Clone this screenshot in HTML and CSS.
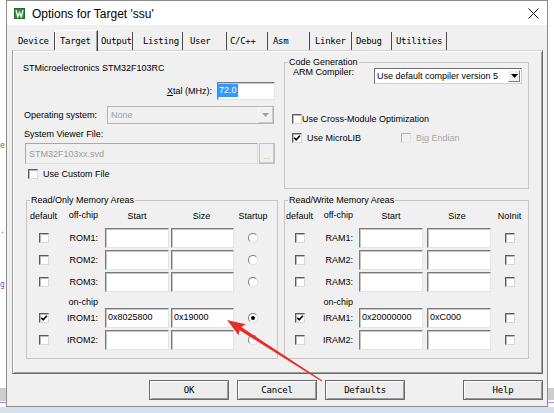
FILE: index.html
```html
<!DOCTYPE html>
<html>
<head>
<meta charset="utf-8">
<title>Options for Target 'ssu'</title>
<link rel="stylesheet" href="styles.css">
</head>
<body>
<div class="desk">
  <span class="deco code code-a">e:</span>
  <span class="deco code code-b">.r</span>
  <span class="deco code code-c">g</span>
  <span class="deco gray-l"></span>
  <span class="deco line-l"></span>
  <span class="deco gray-r"></span>
  <span class="deco line-r"></span>

  <div class="dialog">
    <div class="titlebar">
      <svg class="app-icon" viewBox="0 0 11 11">
        <rect x="0" y="0" width="11" height="11" fill="#2f8f3a"/>
        <rect x="0.5" y="0.5" width="10" height="10" fill="none" stroke="#1d6a27" stroke-width="1"/>
        <path d="M2 2.2 L3.8 8.8 L5.5 4.6 L7.2 8.8 L9 2.2" fill="none" stroke="#fff" stroke-width="1.3"/>
      </svg>
      <span class="title">Options for Target 'ssu'</span>
      <svg class="close" viewBox="0 0 11 11"><path d="M0.5 0.5 L10.5 10.5 M10.5 0.5 L0.5 10.5" stroke="#111" stroke-width="1"/></svg>
    </div>

    <div class="tabs">
      <div class="tab t-device">Device</div>
      <div class="tab active t-target">Target</div>
      <div class="tab t-output">Output</div>
      <div class="tab t-listing">Listing</div>
      <div class="tab t-user">User</div>
      <div class="tab t-cpp">C/C++</div>
      <div class="tab t-asm">Asm</div>
      <div class="tab t-linker">Linker</div>
      <div class="tab t-debug">Debug</div>
      <div class="tab t-util">Utilities</div>
    </div>

    <div class="page">
      <div class="top">
        <div class="target-col">
          <div class="devname">STMicroelectronics STM32F103RC</div>
          <div class="xtal-row">
            <span><u>X</u>tal (MHz):</span>
            <div class="edit xtal"><span class="sel">72.0</span></div>
          </div>
          <div class="os-row">
            <span class="lbl">Operating system:</span>
            <div class="combo dis os">
              <span class="ctext">None</span>
              <span class="drop"><svg viewBox="0 0 7 4" class="tri"><path d="M0 0 H7 L3.5 4 Z" fill="#a0a0a0"/></svg></span>
            </div>
          </div>
          <div class="svf-label">System Viewer File:</div>
          <div class="svf-row">
            <div class="edit dis svf">STM32F103xx.svd</div>
            <div class="browse">...</div>
          </div>
          <div class="custom-row">
            <span class="cb"></span>
            <span>Use Custom File</span>
          </div>
        </div>

        <div class="group codegen">
          <div class="group-title">Code Generation</div>
          <div class="arm-row">
            <span class="lbl">ARM Compiler:</span>
            <div class="combo arm">
              <span class="ctext">Use default compiler version 5</span>
              <span class="drop"><svg viewBox="0 0 7 4" class="tri"><path d="M0 0 H7 L3.5 4 Z" fill="#000"/></svg></span>
            </div>
          </div>
          <div class="opt-row first">
            <span class="cb"></span>
            <span>Use Cross-Module Optimization</span>
          </div>
          <div class="opt-row">
            <span class="opt wide">
              <span class="cb"><svg class="tick" viewBox="0 0 8 8"><path d="M1.2 3.8 L3.2 5.8 L6.8 1.8" fill="none" stroke="#000" stroke-width="1.6"/></svg></span>
              <span>Use MicroLIB</span>
            </span>
            <span class="opt disabled">
              <span class="cb dis"></span>
              <span>B<u>i</u>g Endian</span>
            </span>
          </div>
        </div>
      </div>

      <div class="mem">
        <div class="group memgroup rom">
          <div class="group-title">Read/Only Memory Areas</div>
          <div class="mgrid">
            <span class="hd">default</span><span class="hd lb">off-chip</span><span class="hd">Start</span><span class="hd">Size</span><span class="hd">Startup</span>

            <span class="cb"></span><span class="lb">ROM1:</span><div class="edit st"></div><div class="edit sz"></div><span class="rb"></span>
            <span class="cb"></span><span class="lb">ROM2:</span><div class="edit st"></div><div class="edit sz"></div><span class="rb"></span>
            <span class="cb"></span><span class="lb">ROM3:</span><div class="edit st"></div><div class="edit sz"></div><span class="rb"></span>

            <span></span><span class="lb onchip">on-chip</span><span class="rest"></span>

            <span class="cb"><svg class="tick" viewBox="0 0 8 8"><path d="M1.2 3.8 L3.2 5.8 L6.8 1.8" fill="none" stroke="#000" stroke-width="1.6"/></svg></span><span class="lb">IROM1:</span><div class="edit st">0x8025800</div><div class="edit sz">0x19000</div><span class="rb on"></span>
            <span class="cb"></span><span class="lb">IROM2:</span><div class="edit st"></div><div class="edit sz"></div><span class="rb"></span>
          </div>
        </div>

        <div class="group memgroup ram">
          <div class="group-title">Read/Write Memory Areas</div>
          <div class="mgrid">
            <span class="hd">default</span><span class="hd lb">off-chip</span><span class="hd">Start</span><span class="hd">Size</span><span class="hd">NoInit</span>

            <span class="cb"></span><span class="lb">RAM1:</span><div class="edit st"></div><div class="edit sz"></div><span class="cb"></span>
            <span class="cb"></span><span class="lb">RAM2:</span><div class="edit st"></div><div class="edit sz"></div><span class="cb"></span>
            <span class="cb"></span><span class="lb">RAM3:</span><div class="edit st"></div><div class="edit sz"></div><span class="cb"></span>

            <span></span><span class="lb onchip">on-chip</span><span class="rest"></span>

            <span class="cb"><svg class="tick" viewBox="0 0 8 8"><path d="M1.2 3.8 L3.2 5.8 L6.8 1.8" fill="none" stroke="#000" stroke-width="1.6"/></svg></span><span class="lb">IRAM1:</span><div class="edit st">0x20000000</div><div class="edit sz">0xC000</div><span class="cb"></span>
            <span class="cb"></span><span class="lb">IRAM2:</span><div class="edit st"></div><div class="edit sz"></div><span class="cb"></span>
          </div>
        </div>
      </div>
    </div>

    <div class="buttons">
      <div class="btn">OK</div>
      <div class="btn">Cancel</div>
      <div class="btn">Defaults</div>
      <div class="btn help">Help</div>
    </div>
  </div>
  <div class="band"></div>

  <svg class="arrow" viewBox="0 0 554 413" width="554" height="413">
    <polygon fill="#e5302a" points="322.3,380.5 241.4,327.1 245.7,324.3 227,320 238.6,335.2 239.5,330.2 321.7,381.4"/>
  </svg>
</div>
</body>
</html>
```

FILE: styles.css
```css
* { box-sizing: border-box; }
html, body { margin: 0; padding: 0; }
body {
  width: 554px;
  height: 413px;
  overflow: hidden;
  background: #fff;
  font-family: "Liberation Sans", Arial, sans-serif;
  font-size: 9px;
  color: #000;
}

.desk {
  position: relative;
  width: 554px;
  height: 413px;
  display: flex;
  flex-direction: column;
}

/* desktop bits behind the dialog */
.deco { position: absolute; z-index: 0; }
.code { left: 0; font-family: "DejaVu Sans Mono", monospace; font-size: 8px; line-height: 9px; }
.code-a { top: 141px; color: #2e7d4f; }
.code-b { top: 226px; color: #8b3fbf; }
.code-c { top: 280px; color: #8b3fbf; }
.gray-l { left: 0; top: 388px; width: 6px; height: 13px; background: #cdcdcd; }
.line-l { left: 0; top: 402px; width: 6px; height: 1px; background: #a88ad8; }
.gray-r { left: 548px; top: 388px; width: 6px; height: 12px; background: #cdcdcd; }
.line-r { left: 548px; top: 402px; width: 6px; height: 1px; background: #a88ad8; }

.dialog {
  position: relative;
  z-index: 1;
  margin-left: 6px;
  width: 542px;
  height: 407px;
  flex: none;
  border: 1px solid #8c8c8c;
  background: #f0f0f0;
  display: flex;
  flex-direction: column;
}
.band { flex: 1; background: #d4e0ed; }

/* title bar */
.titlebar {
  height: 24px;
  flex: none;
  background: #fff;
  display: flex;
  align-items: center;
  padding: 1px 8px 0 7px;
}
.app-icon { width: 11px; height: 11px; flex: none; display: block; }
.title { margin-left: 7px; flex: 1; font-size: 12px; line-height: 16px; white-space: pre; }
.close { width: 11px; height: 11px; flex: none; display: block; }

/* tabs */
.tabs {
  height: 25px;
  flex: none;
  display: flex;
  align-items: flex-end;
  padding-left: 6px;
  font-family: "DejaVu Sans Mono", monospace;
  font-size: 9px;
  letter-spacing: -0.3px;
}
.tab {
  flex: none;
  height: 18px;
  padding-top: 1px;
  line-height: 17px;
  border-right: 1px solid #4a4a4a;
  white-space: pre;
}
.tab.active {
  height: 21px;
  margin-bottom: -1px;
  padding-top: 0;
  line-height: 20px;
  border-top: 1px solid #fff;
  border-left: 1px solid #fff;
  border-right-color: #3c3c3c;
  box-shadow: inset -1px 0 0 #a0a0a0;
  background: #f0f0f0;
  position: relative;
  z-index: 2;
}
.t-device { width: 42px; padding-left: 5px; }
.t-target { width: 43px; padding-left: 4px; }
.t-output { width: 35px; padding-left: 3px; }
.t-listing { width: 50px; padding-left: 10px; }
.t-user { width: 44px; padding-left: 7px; }
.t-cpp { width: 41px; padding-left: 3px; }
.t-asm { width: 42px; padding-left: 5px; }
.t-linker { width: 42px; padding-left: 5px; }
.t-debug { width: 40px; padding-left: 4px; }
.t-util { width: 55px; padding-left: 4px; }

/* tab page */
.page {
  flex: none;
  margin-left: 5px;
  width: 531px;
  height: 324px;
  border: 1px solid;
  border-color: #d4d4d4 #696969 #696969 #a0a0a0;
  box-shadow: inset 1px 1px 0 #fff, inset -1px -1px 0 #a0a0a0;
  display: flex;
  flex-direction: column;
}

.top {
  display: grid;
  grid-template-columns: 271px 245px;
  align-items: start;
  padding-top: 11px;
}

.target-col {
  display: flex;
  flex-direction: column;
  padding: 0 9px 0 10px;
}
.devname { line-height: 13px; white-space: nowrap; }
.xtal-row {
  margin-top: 7px;
  display: flex;
  justify-content: flex-end;
  align-items: center;
  gap: 5px;
  line-height: 12px;
}
.os-row {
  margin-top: 6px;
  display: flex;
  align-items: center;
  padding-left: 1px;
  line-height: 12px;
}
.os-row .combo { margin-left: auto; margin-right: 1px; }
.svf-label { margin-top: 4px; line-height: 13px; padding-left: 1px; }
.svf-row { margin-top: 2px; display: flex; gap: 1px; padding-left: 2px; }
.custom-row {
  margin-top: 4px;
  height: 12px;
  display: flex;
  align-items: center;
  gap: 5px;
  padding-left: 5px;
  line-height: 12px;
}

/* edit boxes */
.edit {
  height: 20px;
  background: #fff;
  border: 1px solid;
  border-color: #7a7a7a #e3e3e3 #e3e3e3 #7a7a7a;
  box-shadow: inset 1px 1px 0 #c4c4c4;
  padding: 2px 2px 0;
  line-height: 13px;
  white-space: nowrap;
  overflow: hidden;
}
.edit.xtal { width: 58px; height: 18px; padding: 1px 0 0 0; line-height: 13px; }
.sel { display: inline-block; background: #3399ff; color: #fff; padding: 0 1px; line-height: 13px; }
.edit.dis { background: #f0f0f0; color: #9c9c9c; border-color: #a8a8a8 #dcdcdc #dcdcdc #a8a8a8; box-shadow: none; }
.edit.svf { width: 233px; height: 21px; padding: 4px 3px 0; }
.browse {
  width: 16px;
  height: 21px;
  border: 1px solid;
  border-color: #fff #8a8a8a #8a8a8a #fff;
  box-shadow: inset -1px -1px 0 #c8c8c8;
  outline: 1px solid #c0c0c0;
  outline-offset: -1px;
  color: #a0a0a0;
  text-align: center;
  line-height: 26px;
  font-size: 8px;
  background: #f0f0f0;
}

/* combo boxes */
.combo {
  display: flex;
  align-items: center;
  background: #fff;
  border: 1px solid;
  border-color: #6e6e6e #d0d0d0 #d0d0d0 #6e6e6e;
}
.combo.arm { margin-left: auto; width: 148px; height: 16px; }
.combo.os { width: 167px; height: 18px; }
.combo.dis { background: #f0f0f0; border-color: #b4b4b4; color: #a0a0a0; }
.ctext { flex: 1; padding-left: 2px; line-height: 12px; white-space: nowrap; overflow: hidden; }
.combo.os .ctext { padding-left: 3px; }
.drop {
  flex: none;
  width: 12px;
  height: 12px;
  margin-right: 1px;
  display: flex;
  align-items: center;
  justify-content: center;
  background: #f0f0f0;
  border: 1px solid;
  border-color: #fff #7a7a7a #7a7a7a #fff;
}
.combo.os .drop { width: 15px; height: 16px; margin-right: 0; border-color: #f8f8f8 #c8c8c8 #c8c8c8 #f8f8f8; }
.tri { width: 7px; height: 4px; display: block; }

/* group boxes */
.group {
  border: 1px solid #c6c6c6;
  display: flex;
  flex-direction: column;
}
.group-title {
  align-self: flex-start;
  margin: -7px 0 0 3px;
  padding: 0 1px;
  line-height: 12px;
  background: #f0f0f0;
  white-space: nowrap;
}
.codegen { height: 127px; }
.arm-row {
  display: flex;
  align-items: flex-start;
  padding: 0 6px 0 8px;
}
.arm-row .lbl { margin-top: -2px; line-height: 12px; }
.opt-row {
  height: 12px;
  margin-top: 7px;
  display: flex;
  align-items: center;
  padding-left: 7px;
  line-height: 12px;
  white-space: nowrap;
}
.opt-row.first { margin-top: 29px; }
.opt { display: flex; align-items: center; gap: 5px; }
.opt.wide { width: 109px; }
.opt.disabled { color: #a8a8a8; }

/* checkbox / radio */
.cb {
  flex: none;
  width: 10px;
  height: 10px;
  background: #fff;
  border: 1px solid;
  border-color: #5a5a5a #d8d8d8 #d8d8d8 #5a5a5a;
  box-shadow: inset 1px 1px 0 #b8b8b8;
  display: flex;
  align-items: center;
  justify-content: center;
}
.cb.dis { background: #f0f0f0; border-color: #b0b0b0 #e4e4e4 #e4e4e4 #b0b0b0; box-shadow: none; }
.tick { width: 8px; height: 8px; display: block; }
.rb {
  width: 10px;
  height: 10px;
  border-radius: 50%;
  background: #fff;
  border: 1px solid;
  border-color: #7a7a7a #e0e0e0 #e0e0e0 #7a7a7a;
  display: flex;
  align-items: center;
  justify-content: center;
}
.rb.on::after {
  content: "";
  width: 4px;
  height: 4px;
  border-radius: 50%;
  background: #000;
}

/* memory areas */
.mem {
  display: grid;
  grid-template-columns: 252px 245px;
  column-gap: 6px;
  margin-top: 11px;
  padding-left: 13px;
}
.memgroup { height: 159px; }
.mgrid {
  display: grid;
  margin-top: 3px;
  grid-template-rows: 17px 20px 20px 20px 12px 20px 20px;
  row-gap: 2px;
  align-items: center;
  justify-items: center;
  white-space: nowrap;
}
.rom .mgrid { grid-template-columns: 33px 45px 64px 65px 38px; }
.ram .mgrid { grid-template-columns: 29px 45px 64px 68px 37px; }
.hd { align-self: start; line-height: 14px; }
.lb { justify-self: stretch; text-align: right; padding-right: 7px; line-height: 12px; }
.ram .lb { padding-right: 6px; }
.onchip { align-self: start; line-height: 16px; }
.rest { grid-column: span 3; }
.mgrid .edit { justify-self: stretch; }
.rom .edit.sz { justify-self: end; width: 63px; }
.ram .edit.sz { justify-self: end; width: 64px; }

/* buttons */
.buttons {
  display: flex;
  margin-top: 6px;
  padding: 0 4px 0 142px;
  gap: 8px;
  font-family: "DejaVu Sans Mono", monospace;
  font-size: 9px;
  letter-spacing: -0.2px;
}
.btn {
  width: 80px;
  height: 20px;
  display: flex;
  align-items: center;
  justify-content: center;
  background: #ececec;
  border: 1px solid #6a6a6a;
  box-shadow: inset 1px 1px 0 #fff, inset -1px -1px 0 #9a9a9a;
}
.btn.help { margin-left: auto; }

/* annotation */
.arrow {
  position: absolute;
  left: 0;
  top: 0;
  z-index: 5;
  pointer-events: none;
}
```
